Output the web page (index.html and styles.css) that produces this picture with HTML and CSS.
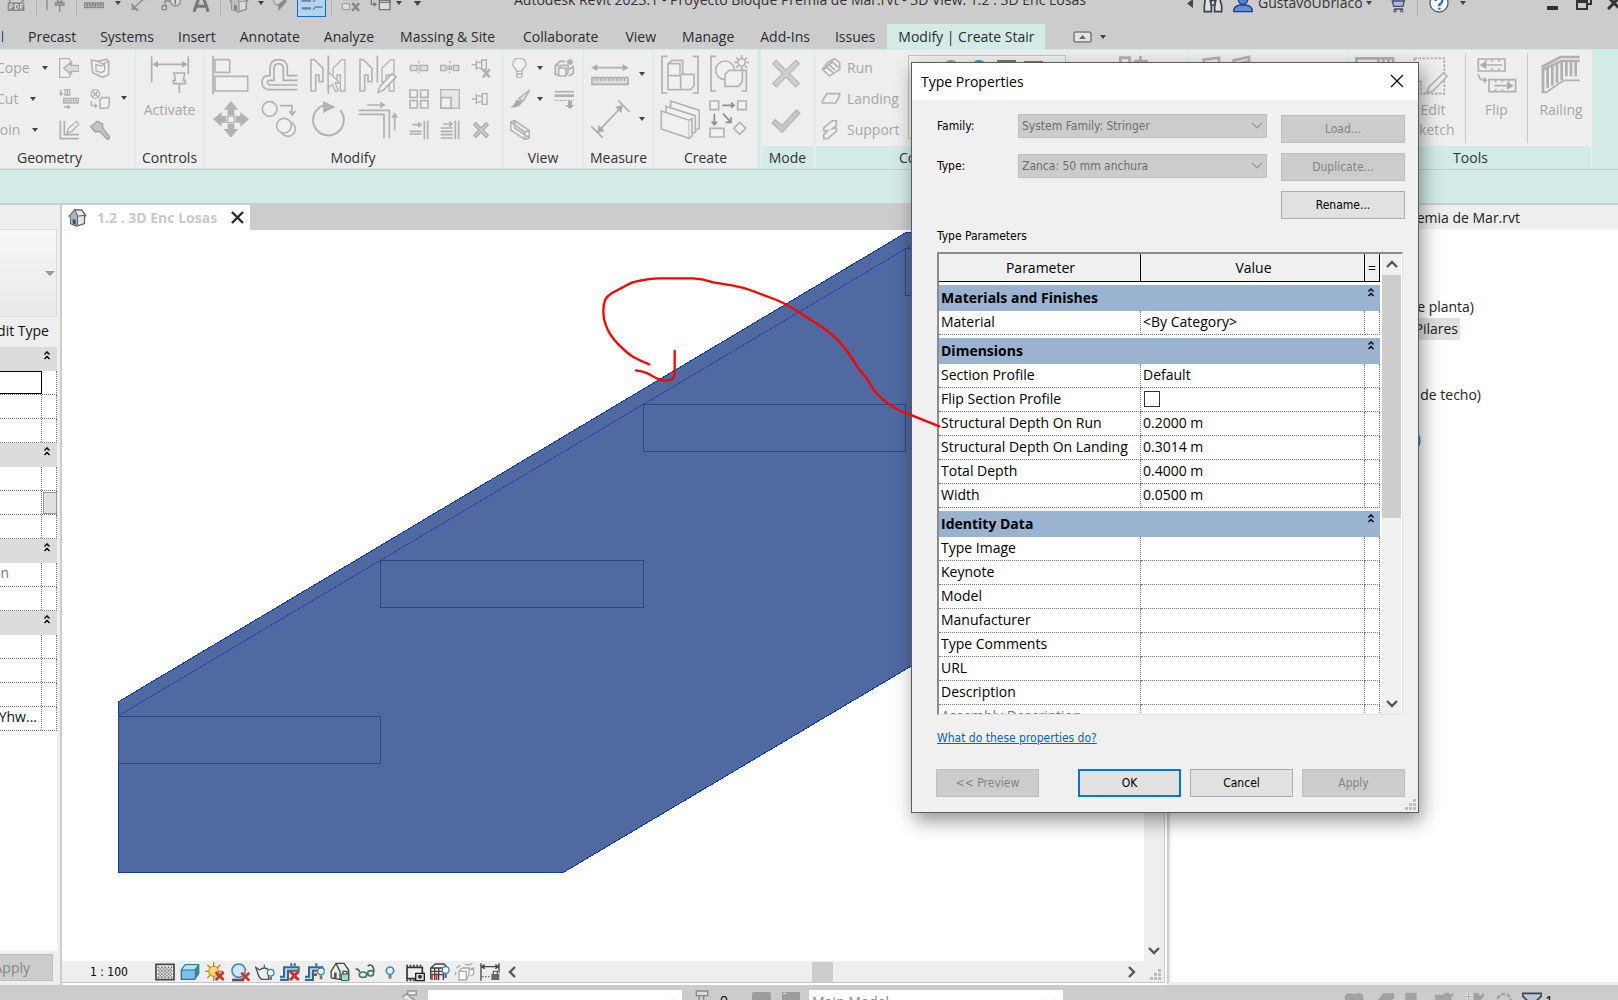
FILE: index.html
```html
<!DOCTYPE html>
<html lang="en">
<head>
<meta charset="utf-8">
<title>Autodesk Revit 2023.1</title>
<link rel="stylesheet" href="styles.css">
</head>
<body>
<svg class="defs" aria-hidden="true">
  <symbol id="dn" viewBox="0 0 6 4"><path d="M0 0h6L3 4z"/></symbol>
  <symbol id="chev" viewBox="0 0 12 8"><path d="M1 1l5 5 5-5" fill="none" stroke="currentColor" stroke-width="1.2"/></symbol>
  <symbol id="arrow" viewBox="0 0 12 8"><path d="M1 1l5 5 5-5" fill="none" stroke="currentColor" stroke-width="2.4"/></symbol>
  <symbol id="dbl" viewBox="0 0 6 9"><path d="M.5 3.500L3 1l2.500 2.500M.5 8L3 5.500 5.500 8" fill="none" stroke="#000" stroke-width="1.500"/></symbol>
  <symbol id="grip" viewBox="0 0 11 11"><path d="M8 0h3v3H8zM4 4h3v3H4zM8 4h3v3H8zM0 8h3v3H0zM4 8h3v3H4zM8 8h3v3H8z" fill="#bdbdbd"/></symbol>
  <symbol id="house" viewBox="0 0 60 60"><path d="M4 26L22 5l22 2 12 17-4 4v21L27 57 8 49V28z" fill="#e4e7ea" stroke="#555b63" stroke-width="4"/><path d="M8 24L24 8l6 18v29L9 48z" fill="#a9b3bf"/><path d="M30 26l24-3M30 27v28M22 6l9 20" stroke="#4d545e" stroke-width="3" fill="none"/><path d="M15 35l9 3v15l-9-4z" fill="#41474f"/></symbol>
</svg>

<header class="titlebar">
  <div class="title-row">
    <div class="quick">
      <svg width="20" height="20" viewBox="0 0 60 60"><path d="M8 30V2h40v12M8 48h44M38 18h14l-8-9M52 18l-8 9" fill="none" stroke="#888" stroke-width="4"/><path d="M2 28h50v26H2z" fill="#8b8b8b"/><path d="M9 49V34h6q4 4 0 8H9M25 34v15q9 0 9-8t-9-7M41 49V34h8M41 41h6" stroke="#eee" stroke-width="3" fill="none"/></svg>
      <i class="sep"></i>
      <svg width="22" height="20" viewBox="0 0 66 60"><path d="M3 52V2M2 10h22M32 10h18l-3 16h-12zM28 30h26v6H28zM41 36v20" fill="none" stroke="#888" stroke-width="4"/></svg>
      <i class="sep"></i>
      <svg width="20" height="20" viewBox="0 0 60 60"><path d="M2 14h56M12 8L3 14l9 6M48 8l9 6-9 6" fill="none" stroke="#888" stroke-width="4"/><path d="M2 30h56v14H2z" fill="#bbb" stroke="#888" stroke-width="4"/><path d="M8 37h46" stroke="#666" stroke-width="6" stroke-dasharray="4 4"/></svg>
      <svg class="dn" width="6" height="4"><use href="#dn"/></svg>
      <svg width="20" height="20" viewBox="0 0 60 60"><path d="M10 46L50 10M4 34l20 20M8 32l-1 17 17-1M38 12l14-4-4 14" fill="none" stroke="#8a8a8a" stroke-width="4"/></svg>
      <svg width="20" height="20" viewBox="0 0 60 60"><path d="M4 38h12v12H4zM12 36V24h18" fill="none" stroke="#888" stroke-width="4"/><circle cx="43" cy="24" r="15" fill="#d8d8d8" stroke="#8d8d8d" stroke-width="4"/><path d="M43 14v20" stroke="#777" stroke-width="4"/></svg>
      <svg width="18" height="20" viewBox="0 0 54 60"><path d="M6 56L24 6h7l18 50M14 40h26" fill="none" stroke="#777" stroke-width="9"/></svg>
      <i class="sep"></i>
      <svg class="faded" width="20" height="20"><use href="#house"/></svg>
      <svg class="dn" width="6" height="4"><use href="#dn"/></svg>
      <svg width="17" height="20" viewBox="0 0 51 60"><circle cx="24" cy="20" r="17" fill="#d0d0d0" stroke="#999" stroke-width="4"/><path d="M22 54V34l24-20v14z" fill="#888"/></svg>
      <button class="toggle-on" aria-label="Thin lines"><svg width="22" height="20" viewBox="0 0 66 60"><path d="M2 23h28M2 46h28" stroke="#6d7f93" stroke-width="7"/><path d="M36 26l8-8h20M36 50l8-8h20M2 8h28M36 8h28" stroke="#6d7f93" stroke-width="4" fill="none"/></svg></button>
      <i class="sep"></i>
      <svg width="20" height="20" viewBox="0 0 60 60"><path d="M4 6h22v14H4zM32 6h22v14H32zM4 32h22v18H4z" fill="#ddd" stroke="#9a9a9a" stroke-width="3"/><path d="M34 30l20 24M54 30L34 54" stroke="#8a8a8a" stroke-width="8"/></svg>
      <svg width="22" height="20" viewBox="0 0 66 60"><path d="M28 22h32v28H28z" fill="#ddd" stroke="#777" stroke-width="4"/><path d="M28 22h32v6H28zM4 8v26h12M11 28l7 6-7 6M4 8h14" fill="none" stroke="#777" stroke-width="4"/></svg>
      <svg class="dn" width="6" height="4"><use href="#dn"/></svg>
      <svg class="dn" width="9" height="5"><use href="#dn"/></svg>
    </div>
    <h1 class="app-title">Autodesk Revit 2023.1 - Proyecto Bloque Premia de Mar.rvt - 3D View: 1.2 . 3D Enc Losas</h1>
    <div class="account">
      <svg width="6" height="9" viewBox="0 0 6 9"><path d="M6 0v9L0 4.500z" fill="#444"/></svg>
      <svg width="20" height="20" viewBox="0 0 60 60"><path d="M9 6h12v14l4 18v18H4V38zM39 6h12v14l5 18v18H35V38l4-18zM24 22h12v14H24z" fill="#dfe3e8" stroke="#3b424b" stroke-width="5"/></svg>
      <svg width="20" height="20" viewBox="0 0 60 60"><circle cx="30" cy="20" r="14" fill="#4f7fe0" stroke="#2b3e6b" stroke-width="4"/><path d="M2 56q0-18 20-20h16q20 2 20 20z" fill="#5b8cf0" stroke="#2b3e6b" stroke-width="4"/></svg>
      <span class="user">GustavoUbriaco</span>
      <svg class="dn" width="6" height="4"><use href="#dn"/></svg>
      <svg width="19" height="20" viewBox="0 0 57 60"><path d="M2 6h10l8 34h28l6-26H14M22 48h26M14 24h38" fill="#aeb7dc" stroke="#4a4f72" stroke-width="4"/><circle cx="24" cy="53" r="4" fill="none" stroke="#333" stroke-width="3"/><circle cx="44" cy="53" r="4" fill="none" stroke="#333" stroke-width="3"/></svg>
      <i class="sep"></i>
      <svg width="20" height="20" viewBox="0 0 60 60"><circle cx="30" cy="30" r="27" fill="#fff" stroke="#56606b" stroke-width="4"/><path d="M20 24q0-10 10-10t10 9q0 6-9 12v5M31 44v6" stroke="#2d6bd6" stroke-width="7" fill="none"/></svg>
      <svg class="dn" width="6" height="4"><use href="#dn"/></svg>
      <svg width="11" height="14" viewBox="0 0 11 14"><path d="M0 12h11" stroke="#333" stroke-width="4"/></svg>
      <svg width="16" height="14" viewBox="0 0 16 14"><path d="M1 5h10v8H1zM1 6h10M5 4V1h10v7h-3" fill="none" stroke="#333" stroke-width="2"/></svg>
      <svg width="14" height="14" viewBox="0 0 14 14"><path d="M1 1l12 12M13 1L1 13" stroke="#333" stroke-width="3"/></svg>
    </div>
  </div>
</header>

<nav class="tabs">
  <a class="tab first" href="#">Steel</a><a class="tab" href="#">Precast</a><a class="tab" href="#">Systems</a><a class="tab" href="#">Insert</a><a class="tab" href="#">Annotate</a><a class="tab" href="#">Analyze</a><a class="tab long" href="#">Massing &amp; Site</a><a class="tab long" href="#">Collaborate</a><a class="tab mid" href="#">View</a><a class="tab mid" href="#">Manage</a><a class="tab mid" href="#">Add-Ins</a><a class="tab" href="#">Issues</a><a class="tab active" href="#">Modify | Create Stair</a>
  <svg class="min-ribbon" width="19" height="12" viewBox="0 0 19 12"><rect x="1" y="1" width="17" height="10" rx="2" fill="#e4e4e4" stroke="#7b7b7b" stroke-width="1.500"/><path d="M6 8h7L9.500 4z" fill="#666"/></svg>
  <svg class="dn" width="6" height="4"><use href="#dn"/></svg>
</nav>

<div class="ribbon">
  <section class="panel p-geometry">
    <div class="panel-body">
      <div class="stack geo-text">
        <button>Cope<svg class="dn" width="6" height="4"><use href="#dn"/></svg></button>
        <button>Cut<svg class="dn" width="6" height="4"><use href="#dn"/></svg></button>
        <button>Join<svg class="dn" width="6" height="4"><use href="#dn"/></svg></button>
      </div>
      <div class="icons geo">
        <button aria-label="Notch"><svg viewBox="0 0 60 60"><path d="M2 2h28l8 12v30l-8 14H2z" class="f"/><path d="M34 14L14 31l20 17V40h26V22H34z" class="d"/></svg></button>
        <button aria-label="Cut profile"><svg viewBox="0 0 60 60"><path d="M14 28h46v14H14z" class="d"/><path d="M18 2h14v16H18zM25 4v12M6 2v14M1 12l5 6 5-6M14 54h18M26 49l6 5-6 5" class="s"/><path d="M18 35h42" stroke="#999" stroke-width="5" stroke-dasharray="4 4"/></svg></button>
        <button aria-label="Beam joins"><svg viewBox="0 0 60 60"><path d="M4 2v54h56M16 2v42h44" class="s w"/><path d="M24 40l4-14L52 4l8 8-22 22z" class="f"/></svg></button>
        <button aria-label="Split face"><svg viewBox="0 0 60 60"><path d="M4 6l20 4 26-6 6 6v40l-18 8L8 44z" class="f w"/><path d="M18 20l16 4 10-4v18l-10 6-16-6zM24 10l14 8 18-8" class="s"/></svg></button>
        <button aria-label="Paint"><svg viewBox="0 0 60 60"><circle cx="16" cy="15" r="13" class="f"/><path d="M7 6l18 18M25 6L7 24M4 36v14h16M14 44l6 6-6 6" class="s"/><path d="M30 32l6-6h22v22l-6 10H30z" class="f w"/></svg></button>
        <button aria-label="Demolish"><svg viewBox="0 0 60 60"><path d="M2 20L22 4l16 8v12l22 28-7 7-25-25-12 2z" fill="#c4c4c4" stroke="#a2a2a2" stroke-width="4"/></svg></button>
      </div>
      <svg class="dn geo-dn" width="6" height="4"><use href="#dn"/></svg>
    </div>
    <h2>Geometry</h2>
  </section>
  <section class="panel p-controls">
    <div class="panel-body">
      <button class="big"><svg width="40" height="40" viewBox="0 0 120 120"><path d="M5 4v78M115 4v54M10 28h100" class="s w"/><path d="M8 28l16-10v20zM112 28L96 18v20z" fill="#aaa"/><path d="M72 54h32l-4 22h6v10H70V76h6zM88 86v28" class="s w"/></svg><span>Activate</span></button>
    </div>
    <h2>Controls</h2>
  </section>
  <section class="panel p-modify">
    <div class="panel-body">
      <div class="bigs">
        <button aria-label="Align"><svg viewBox="0 0 120 120"><path d="M6 2v116" class="s w"/><path d="M12 14h44v38H12zM12 64h98v44H12z" class="f w"/></svg></button>
        <button aria-label="Move"><svg viewBox="0 0 120 120"><path d="M60 6l22 26H70v16H50V32H38zM60 116l22-26H70V74H50v16H38zM6 61l26-22v12h14v20H32v12zM114 61L88 39v12H74v20h14v12z" fill="#b2b2b2"/><path d="M50 51h20v20H50z" class="f"/></svg></button>
        <button aria-label="Offset"><svg viewBox="0 0 120 120"><path d="M112 62H82V40q0-26-26-26T30 40v22h-6q-18 2-18 20t18 22h88M112 76H70V42q0-16-14-16T42 42v34H28q-12 6 0 14h84" class="s w"/></svg></button>
        <button aria-label="Copy"><svg viewBox="0 0 120 120"><circle cx="29" cy="30" r="22" class="f w"/><path d="M60 20h36v24M88 36l9 12 9-12" class="s w"/><circle cx="84" cy="90" r="22" class="f w"/><circle cx="72" cy="80" r="22" class="f w"/></svg></button>
        <button aria-label="Mirror pick axis"><svg viewBox="0 0 120 120"><path d="M6 14h10l26 26v40H30V60H20v48H6z" class="f w"/><path d="M108 14H98L72 40v40h12V60h10v48h14z" class="f"/><path d="M58 2v114" class="s w"/><path d="M58 50l34 34H78l10 22-8 4-10-22-12 10z" class="f"/></svg></button>
        <button aria-label="Rotate"><svg viewBox="0 0 120 120"><path d="M94 34a46 46 0 1 1-52-14" fill="none" stroke="#b2b2b2" stroke-width="6"/><path d="M42 6l38 18-38 18z" fill="#b2b2b2"/></svg></button>
        <button aria-label="Mirror draw axis"><svg viewBox="0 0 120 120"><path d="M6 14h10l26 26v40H30V60H20v48H6z" class="f w"/><path d="M108 14H98L72 40v40h12V60h10v48h14z" class="f"/><path d="M58 2v80" class="s w"/><path d="M60 112l6-18 36-38 12 10-38 40z" class="f w"/></svg></button>
        <button aria-label="Trim corner"><svg viewBox="0 0 120 120"><path d="M28 18h48M66 10l12 8-12 8M110 94V46M102 56l8-12 8 12M2 34h92v84M2 46h76v72" class="s w"/></svg></button>
      </div>
      <div class="icons mod">
        <button aria-label="Split"><svg viewBox="0 0 60 60"><path d="M4 22h20v16H4zM34 22h22v16H34z" class="d"/><path d="M30 10v40" class="s" stroke-dasharray="6 4"/></svg></button>
        <button aria-label="Array"><svg viewBox="0 0 60 60"><path d="M3 3h22v22H3zM35 3h22v22H35zM3 35h22v22H3zM35 35h22v22H35z" class="f w"/></svg></button>
        <button aria-label="Trim single"><svg viewBox="0 0 60 60"><path d="M46 2v56M56 2v56M2 34h36M2 42h36M10 14h24M28 7l8 7-8 7" class="s w"/></svg></button>
        <button aria-label="Split with gap"><svg viewBox="0 0 60 60"><path d="M2 22h16v16H2zM40 22h16v16H40z" class="d"/><path d="M29 10v40" class="s" stroke-dasharray="6 4"/><path d="M24 26h10v8H24z" class="s"/></svg></button>
        <button aria-label="Scale"><svg viewBox="0 0 60 60"><path d="M2 2h56v56H2z" fill="#e6e6e6" stroke="#b4b4b4" stroke-width="4"/><path d="M3 26h30v31H3z" class="f w"/></svg></button>
        <button aria-label="Trim multiple"><svg viewBox="0 0 60 60"><path d="M46 2v56M56 2v56M2 24h36M2 34h36M2 44h36M2 54h36M10 12h24M28 5l8 7-8 7" class="s w"/></svg></button>
        <button aria-label="Unpin"><svg viewBox="0 0 60 60"><path d="M2 20h14M16 6v30M16 14l16-2v20l-16-4M32 6h14v28H32z" class="s"/><path d="M36 34l20 24M56 34L36 58" class="s ww"/></svg></button>
        <button aria-label="Pin"><svg viewBox="0 0 60 60"><path d="M2 30h14M16 14v32M16 20l18 2v16l-18 2M34 14h14v32H34z" class="s"/></svg></button>
        <button aria-label="Delete"><svg viewBox="0 0 60 60"><path d="M10 10l40 40M50 10L10 50" stroke="#aaa" stroke-width="13"/><path d="M12 12l36 36M48 12L12 48" stroke="#d0d0d0" stroke-width="5"/></svg></button>
      </div>
    </div>
    <h2>Modify</h2>
  </section>
  <section class="panel p-view">
    <div class="panel-body">
      <div class="icons v1">
        <button aria-label="Hide"><svg viewBox="0 0 60 60"><path d="M20 38C18 32 8 28 8 18a20 18 0 0 1 40 0c0 10-10 14-12 20v18l-8 4-8-4zM20 40h16M20 48h16" class="f"/></svg></button>
        <button aria-label="Override"><svg viewBox="0 0 60 60"><path d="M60 2L40 36 26 28z" class="d"/><path d="M38 36q-6 22-38 20 14-8 18-24z" fill="#aaa"/></svg></button>
        <button aria-label="Selection box"><svg viewBox="0 0 60 60"><path d="M2 6l12-4 44 30v22l-14 4L2 30zM2 6l42 30v20M14 2v22l42 28M44 36l14-4" class="f w"/></svg></button>
      </div>
      <div class="stack v-dn"><svg class="dn" width="6" height="4"><use href="#dn"/></svg><svg class="dn" width="6" height="4"><use href="#dn"/></svg></div>
      <div class="icons v1">
        <button aria-label="Displace"><svg viewBox="0 0 60 60"><path d="M4 22l14-12h16M4 22v28h10M44 34l14-8v20l-14 8M4 22h12" class="s w"/><path d="M14 30h22v24H14zM14 30l8-8h20v22l-6 8" class="f w"/><path d="M48 2v20M38 12h20M41 5l14 14M55 5L41 19" class="s"/></svg></button>
        <button aria-label="Linework"><svg viewBox="0 0 60 60"><path d="M2 8h58" class="s w"/><path d="M2 20h58" class="s ww"/><path d="M2 34h58" class="s" stroke-dasharray="5 3"/><path d="M42 36h12v12h8L48 60 34 48h8z" fill="#aaa"/></svg></button>
      </div>
    </div>
    <h2>View</h2>
  </section>
  <section class="panel p-measure">
    <div class="panel-body">
      <div class="bigs">
        <button aria-label="Measure length"><svg viewBox="0 0 120 120"><path d="M8 38h104" class="s w"/><path d="M4 38l18-10v20zM116 38L98 28v20z" fill="#aaa"/><path d="M6 68h108v20H6z" class="d w"/><path d="M14 74h94" stroke="#8f8f8f" stroke-width="6" stroke-dasharray="3 5"/></svg></button>
        <button aria-label="Aligned dimension"><svg viewBox="0 0 120 120"><path d="M24 98l72-76M4 82l34 34M84 4l34 34" class="s w"/><path d="M22 102l4-24 18 18zM98 18l-4 24-18-18z" fill="#aaa"/></svg></button>
      </div>
      <div class="stack2"><svg class="dn" width="6" height="4"><use href="#dn"/></svg><svg class="dn" width="6" height="4"><use href="#dn"/></svg></div>
    </div>
    <h2>Measure</h2>
  </section>
  <section class="panel p-create">
    <div class="panel-body">
      <div class="bigs">
        <button aria-label="Create group"><svg viewBox="0 0 120 120"><path d="M22 4H6v110h16M98 4h16v110H98" class="s w"/><path d="M24 26l12-10h32v42h34v34l-10 12H24zM24 62h38v42M62 62l10-8M24 26h36v32" class="f w"/></svg></button>
        <button aria-label="Create assembly"><svg viewBox="0 0 120 120"><path d="M32 6l86 28v54l-14 6-72-30z" class="f w"/><path d="M18 22l88 28v50l-14 4-74-28z" class="f w"/><path d="M4 36l84 28v54L4 90z" class="f w"/><path d="M88 64l8-6v52l-8 8" class="f w"/></svg></button>
        <button aria-label="Create parts"><svg viewBox="0 0 120 120"><path d="M22 4H6v104h16M98 46v0h14v62H98" class="s w"/><circle cx="48" cy="46" r="28" class="f w"/><path d="M48 58l12-12h40v34L88 94H48z" class="f w"/><circle cx="98" cy="22" r="11" class="f w"/><path d="M98 0v8M98 36v8M76 22h8M112 22h8M82 8l6 6M114 8l-6 6M82 38l6-6M114 38l-6-6" class="s w"/></svg></button>
        <button aria-label="Create similar"><svg viewBox="0 0 120 120"><path d="M3 6h26v26H3zM86 6h26v26H86zM3 88h42v26H3zM92 70l18 18-18 18-18-18z" class="f w"/><path d="M40 19h34M66 11l9 8-9 8M16 44v32M8 68l8 9 8-9M42 44l24 26M66 54v16H50" stroke="#8e8e8e" stroke-width="5" fill="none"/></svg></button>
      </div>
    </div>
    <h2>Create</h2>
  </section>
  <section class="panel ctx p-mode">
    <div class="panel-body">
      <div class="bigs">
        <button aria-label="Cancel edit"><svg viewBox="0 0 120 120"><path d="M24 20l72 72M96 20L24 92" stroke="#b4b4b4" stroke-width="18"/><path d="M27 23l66 66M93 23L27 89" stroke="#cfcfcf" stroke-width="11"/></svg></button>
        <button aria-label="Finish edit"><svg viewBox="0 0 120 120"><path d="M22 66l26 24 50-54" stroke="#b4b4b4" stroke-width="18" fill="none"/><path d="M25 69l23 21 47-51" stroke="#c8c8c8" stroke-width="11" fill="none"/></svg></button>
      </div>
    </div>
    <h2>Mode</h2>
  </section>
  <section class="panel ctx p-comp">
    <div class="panel-body">
      <div class="stack comp-text">
        <button><svg width="20" height="20" viewBox="0 0 60 60"><path d="M4 34L26 54 56 34V14L40 2 20 14z" class="f w"/><path d="M8 34l10-6 18 16M16 26l8-6 18 16M26 18l8-6 18 16" class="s w"/></svg>Run</button>
        <button><svg width="20" height="20" viewBox="0 0 60 60"><path d="M18 14h38v6L44 42H4v-6z" class="f w"/></svg>Landing</button>
        <button><svg width="20" height="20" viewBox="0 0 60 60"><path d="M8 24L34 2h12v14L34 26l12-2v10L20 56H8V44l12-12H8z" class="f w"/></svg>Support</button>
      </div>
      <div class="gallery">
        <svg width="150" height="20" viewBox="0 0 150 20"><circle cx="42" cy="12" r="8" fill="#9a9a9a"/><circle cx="70" cy="12" r="8" fill="#4a8fd0"/><path d="M88 4h19v12H88zM115 5h19v12h-19z" fill="#777"/></svg>
      </div>
    </div>
    <h2>Component</h2>
  </section>
  <section class="panel ctx p-work">
    <div class="panel-body"><svg width="40" height="40" viewBox="0 0 120 120"><path d="M10 40V8h28v16h20M70 2v40M52 18h40" class="s ww"/></svg></div>
    <h2></h2>
  </section>
  <section class="panel ctx p-multi">
    <div class="panel-body"><svg width="80" height="40" viewBox="0 0 240 120"><path d="M20 40V14L66 8v40M110 40V16l46-10v40M130 20v20M110 28l46-8" class="s ww"/></svg></div>
    <h2></h2>
  </section>
  <section class="panel ctx p-tools">
    <div class="panel-body">
      <button class="big t0" aria-label="Convert"><svg width="40" height="40" viewBox="0 0 120 120"><path d="M4 10h110v50H4zM70 10v20M85 10v20M100 10v20" class="s ww"/></svg></button>
      <button class="big t1"><svg width="40" height="40" viewBox="0 0 120 120"><path d="M4 10h90v110M4 10v70h20v36h70" class="s w" stroke-dasharray="8 4"/><path d="M40 114l8-18 44-42 10 10-42 44z" class="f w"/></svg><span>Edit<br>Sketch</span></button>
      <button class="big t2"><svg width="40" height="40" viewBox="0 0 120 120"><path d="M4 12h80v36H4zM36 74h80v36H36zM26 12v8M46 12v8M66 12v8M46 40v8M66 40v8M56 74v8M76 74v8M96 74v8M56 102v8M76 102v8M4 56q0 20 22 20M20 68l8 8-8 8" class="s w"/><path d="M28 30h48M52 92h48" class="s w"/><path d="M8 30l20-12v24zM110 92L90 80v24z" fill="#aaa"/></svg><span>Flip</span></button>
      <button class="big t3"><svg width="40" height="40" viewBox="0 0 120 120"><path d="M2 36L58 6h58M2 46l58-28h56M6 36v76M20 34v66M34 26v66M48 20v64M62 16v60M76 16v48M90 16v48M104 16v48" class="s ww"/><path d="M2 112h14l52-36h48" class="s w"/></svg><span>Railing</span></button>
    </div>
    <h2>Tools</h2>
  </section>
</div>
<div class="options-bar"></div>

<main class="workspace">
  <aside class="properties">
    <div class="type-selector"><svg class="tdn" width="10" height="5" viewBox="0 0 10 5"><path d="M0 0h10L5 5z"/></svg></div>
    <button class="edit-type">Edit Type</button>
    <div class="prop-list">
      <div class="pgroup"><svg width="6" height="9"><use href="#dbl"/></svg></div>
      <div class="prow focus"><span></span></div><div class="prow"><span></span></div><div class="prow"><span></span></div>
      <div class="pgroup"><svg width="6" height="9"><use href="#dbl"/></svg></div>
      <div class="prow"><span></span></div><div class="prow"><span></span><button class="mini" aria-label="Associate parameter"></button></div><div class="prow"><span></span></div>
      <div class="pgroup"><svg width="6" height="9"><use href="#dbl"/></svg></div>
      <div class="prow"><span class="dim">Selection</span></div><div class="prow"><span></span></div>
      <div class="pgroup"><svg width="6" height="9"><use href="#dbl"/></svg></div>
      <div class="prow"><span></span></div><div class="prow"><span></span></div><div class="prow"><span></span></div><div class="prow"><span class="guid">YYhw...</span></div>
    </div>
    <div class="prop-foot"><button class="apply-left" disabled>Apply</button></div>
  </aside>

  <section class="view">
    <div class="doc-tabs">
      <div class="doc-tab"><svg width="19" height="19"><use href="#house"/></svg><span>1.2 . 3D Enc Losas</span><svg class="close-tab" width="13" height="13" viewBox="0 0 13 13"><path d="M1 1l11 11M12 1L1 12" stroke="#2b2b2b" stroke-width="2.400"/></svg></div>
    </div>
    <div class="canvas">
      <svg class="model" width="1082" height="730" viewBox="62 230 1082 730" shape-rendering="crispEdges">
        <path d="M118 872V702L907 232h60v401L564 872z" fill="#5069a0" stroke="#0a3cb0"/>
        <path d="M118 716L966 213" stroke="#2c48a8" fill="none"/>
        <path d="M118.500 716.500h262v47h-262zM380.500 560.500h263v47h-263zM643.500 404.500h262v47h-262zM905.500 248.500h40v47h-40z" fill="none" stroke="#2a4580"/>
      </svg>
      <div class="vscroll"><svg width="12" height="8" class="arr"><use href="#arrow"/></svg></div>
    </div>
    <div class="view-bar">
      <span class="scale">1 : 100</span>
      <div class="vicons">
        <svg viewBox="0 0 60 60"><path d="M3 7h54v46H3z" fill="#f4f4f4" stroke="#444" stroke-width="5"/><path d="M8 16h44M8 26h44M8 36h44M8 46h44" stroke="#666" stroke-width="5" stroke-dasharray="5 5"/><path d="M13 21h40M13 31h40M13 41h40" stroke="#888" stroke-width="5" stroke-dasharray="5 5"/></svg>
        <svg viewBox="0 0 60 60"><path d="M4 24L16 8h40v26L44 52H4z" fill="#7cc0ea" stroke="#33708f" stroke-width="4"/><path d="M4 24L16 8h40L44 24z" fill="#b9e2fa" stroke="#33708f" stroke-width="3"/><path d="M44 24v28l12-18V8z" fill="#3f83ab"/></svg>
        <svg viewBox="0 0 60 60"><path d="M26 0v58M0 28h54M7 8l38 40M46 8L7 48" stroke="#b58a2b" stroke-width="4"/><circle cx="26" cy="28" r="15" fill="#ffd970" stroke="#b88717" stroke-width="3"/><path d="M32 30l24 24M56 30L32 54" stroke="#d2312d" stroke-width="8"/></svg>
        <svg viewBox="0 0 60 60"><path d="M6 54h36" stroke="#555" stroke-width="8"/><circle cx="26" cy="26" r="20" fill="#cfe6fb" stroke="#4e86c0" stroke-width="5"/><path d="M34 32l24 24M58 32L34 56" stroke="#d2312d" stroke-width="8"/></svg>
        <svg viewBox="0 0 60 60"><path d="M2 16l12 8q14-12 28 0l-2 28H20q-10-6-12-20zM28 16v-8" fill="#eee" stroke="#555" stroke-width="4"/><circle cx="47" cy="32" r="10" fill="#fff" stroke="#3d83cc" stroke-width="4"/><path d="M43 44h8v10h-8z" fill="#777"/></svg>
        <svg viewBox="0 0 60 60"><path d="M0 44h12V16h44v10H24v28H0M34 12V4M44 12V4" stroke="#35688f" stroke-width="6" fill="#bcd6ee"/><path d="M30 28l26 26M56 28L30 54" stroke="#d2312d" stroke-width="9"/></svg>
        <svg viewBox="0 0 60 60"><path d="M0 44h12V16h40v10H24v28H0M34 12V4" stroke="#35688f" stroke-width="6" fill="#bcd6ee"/><path d="M26 38h10" stroke="#d2312d" stroke-width="8"/><circle cx="48" cy="28" r="10" fill="#fff" stroke="#3d83cc" stroke-width="4"/><path d="M44 40h8v12h-8z" fill="#777"/></svg>
        <svg viewBox="0 0 60 60"><path d="M3 28L18 4h24l14 20v28H28L4 48zM18 4l12 24v24" fill="#ececec" stroke="#444" stroke-width="4"/><path d="M12 32h8v16h-8z" fill="#555"/><path d="M34 36h22v20H34z" fill="#a9d5c4" stroke="#2d5b4d" stroke-width="3"/><path d="M39 36v-8h12v8" fill="none" stroke="#2d5b4d" stroke-width="4"/></svg>
        <svg viewBox="0 0 60 60"><path d="M2 22q8-4 12 8M34 36l4-2M46 8q12 4 10 22M46 8l-8 4" fill="none" stroke="#555" stroke-width="5"/><ellipse cx="24" cy="38" rx="11" ry="8" fill="#dff0f0" stroke="#4c6f77" stroke-width="5"/><ellipse cx="47" cy="34" rx="9" ry="8" fill="#dff0f0" stroke="#4c6f77" stroke-width="5"/></svg>
        <svg viewBox="0 0 60 60"><circle cx="30" cy="26" r="11" fill="#e9f4ff" stroke="#3d83cc" stroke-width="5"/><path d="M25 38h10v12H25z" fill="#888"/></svg>
        <svg viewBox="0 0 60 60"><path d="M6 16h46v34H6z" fill="#eee" stroke="#333" stroke-width="5"/><path d="M4 11h50M4 55h28" stroke="#333" stroke-width="5" stroke-dasharray="5 5"/><path d="M32 34h26v22H32z" fill="#ddd" stroke="#222" stroke-width="4"/><circle cx="45" cy="44" r="6" fill="#333"/></svg>
        <svg viewBox="0 0 60 60"><path d="M2 52V18l14-12h26l12 12M2 28h38M2 38h38M14 18v36M26 18v36M2 18h38v36" fill="none" stroke="#444" stroke-width="4"/><path d="M6 34v20M20 34v20" stroke="#c33" stroke-width="5"/><circle cx="47" cy="24" r="10" fill="#fff" stroke="#3d83cc" stroke-width="4"/><path d="M43 36h8v12h-8z" fill="#777"/></svg>
        <svg viewBox="0 0 60 60"><path d="M12 28h22v26H12zM12 28l10-10h20v20L34 54M4 18l12-8M2 30v10M44 22l12-4v18l-8 6M30 8h16l6-4" fill="#fafafa" stroke="#aaa" stroke-width="4"/></svg>
        <svg viewBox="0 0 60 60"><path d="M3 4v52M57 4v28M3 14h54M14 8L5 14l9 6M46 8l9 6-9 6" fill="none" stroke="#444" stroke-width="4"/><path d="M6 44h24" stroke="#777" stroke-width="4" stroke-dasharray="5 4"/><path d="M34 36h24v18H34z" fill="#666"/><path d="M40 36v-8h12v8" fill="none" stroke="#666" stroke-width="4"/></svg>
      </div>
      <svg class="arr left" width="12" height="8"><use href="#arrow"/></svg>
      <div class="htrack"><i class="hthumb"></i></div>
      <svg class="arr right" width="12" height="8"><use href="#arrow"/></svg>
      <svg class="vgrip" width="11" height="11"><use href="#grip"/></svg>
    </div>
  </section>

  <aside class="browser">
    <h2 class="browser-head">Premia de Mar.rvt</h2>
    <ul class="tree">
      <li class="r1">(Detalle de planta)</li>
      <li class="r2"><span class="sel">Planta Pilares</span></li>
      <li class="r3">(Plano de techo)</li>
      <li class="r4">(all)</li>
    </ul>
  </aside>
</main>

<footer class="status">
  <svg class="st1" width="18" height="20" viewBox="0 0 54 60"><path d="M20 3h26v12H20zM4 22l14-12 8 10 22 16" fill="#eee" stroke="#999" stroke-width="5"/></svg>
  <div class="st-box b1"><svg class="chv" width="12" height="8"><use href="#chev"/></svg></div>
  <svg class="st2" width="14" height="20" viewBox="0 0 42 60"><path d="M4 3h34v14H4zM12 18v16M26 18v16" fill="#ddd" stroke="#888" stroke-width="4"/></svg>
  <span class="zero">0</span>
  <svg class="st3" width="20" height="16" viewBox="0 0 20 16"><path d="M0 2q0-2 2-2h15q2 0 2 2v14H0z" fill="#9c9c9c"/></svg>
  <svg class="st3" width="19" height="16" viewBox="0 0 19 16"><path d="M0 0h18v16H0z" fill="#9c9c9c"/><path d="M1 1.500h3" stroke="#eee"/></svg>
  <div class="st-box b2"><span>Main Model</span><svg class="chv" width="12" height="8"><use href="#chev"/></svg></div>
  <div class="st-right">
    <svg viewBox="0 0 60 60"><path d="M2 12q4-10 16-8 12 4 24 0 14-2 16 8v40H2z" fill="#a2a2a2"/></svg>
    <svg viewBox="0 0 60 60"><path d="M4 30L24 4h34v12L40 40z" fill="#a2a2a2"/></svg>
    <svg viewBox="0 0 60 60"><path d="M4 2h34v24l12 10H4z" fill="#a2a2a2"/></svg>
    <svg viewBox="0 0 60 60"><path d="M2 8h24l8-6h10l6 6 8-6v10l-8 6 8 8v20H8z" fill="#a2a2a2"/></svg>
    <svg viewBox="0 0 60 60"><path d="M14 2v28M2 14h28" stroke="#eee" stroke-width="8"/><path d="M14 2v28M2 14h28M30 4h12l8 10 8-10v10l-8 8 8 8v20H30z" fill="#a2a2a2" stroke="#a2a2a2" stroke-width="3"/></svg>
    <svg viewBox="0 0 60 60"><circle cx="30" cy="26" r="20" fill="none" stroke="#a2a2a2" stroke-width="8" stroke-dasharray="12 5"/></svg>
    <svg viewBox="0 0 60 60"><path d="M2 4h56v8L36 34H24L2 12z" fill="#b8c6d6" stroke="#3c434c" stroke-width="5"/></svg>
    <span>1</span>
  </div>
</footer>

<div class="dialog" role="dialog" aria-labelledby="dlg-title">
  <header class="dlg-head">
    <h2 id="dlg-title">Type Properties</h2>
    <button class="dlg-close" aria-label="Close"><svg width="14" height="14" viewBox="0 0 14 14"><path d="M1 1l12 12M13 1L1 13" stroke="#000" stroke-width="1.200"/></svg></button>
  </header>
  <div class="dlg-body">
    <div class="dlg-top">
      <div class="fields">
        <label for="family">Family:</label>
        <div class="combo"><select id="family" disabled><option>System Family: Stringer</option></select><svg width="12" height="8"><use href="#chev"/></svg></div>
        <label for="type">Type:</label>
        <div class="combo"><select id="type" disabled><option>Zanca: 50 mm anchura</option></select><svg width="12" height="8"><use href="#chev"/></svg></div>
      </div>
      <div class="side">
        <button class="btn" disabled>Load...</button>
        <button class="btn" disabled>Duplicate...</button>
        <button class="btn">Rename...</button>
      </div>
    </div>
    <h3>Type Parameters</h3>
    <div class="frame">
      <div class="table-wrap">
        <table>
          <colgroup><col class="c1"><col><col class="c3"></colgroup>
          <thead><tr><th>Parameter</th><th>Value</th><th>=</th></tr></thead>
          <tbody>
            <tr class="gap"><td colspan="3"></td></tr>
            <tr class="group"><th colspan="3"><div>Materials and Finishes<svg width="6" height="9"><use href="#dbl"/></svg></div></th></tr>
            <tr><td>Material</td><td>&lt;By Category&gt;</td><td></td></tr>
            <tr class="gap"><td colspan="3"></td></tr>
            <tr class="group"><th colspan="3"><div>Dimensions<svg width="6" height="9"><use href="#dbl"/></svg></div></th></tr>
            <tr><td>Section Profile</td><td>Default</td><td></td></tr>
            <tr><td><label for="flip">Flip Section Profile</label></td><td><input type="checkbox" id="flip"></td><td></td></tr>
            <tr><td>Structural Depth On Run</td><td>0.2000 m</td><td></td></tr>
            <tr><td>Structural Depth On Landing</td><td>0.3014 m</td><td></td></tr>
            <tr><td>Total Depth</td><td>0.4000 m</td><td></td></tr>
            <tr><td>Width</td><td>0.0500 m</td><td></td></tr>
            <tr class="gap"><td colspan="3"></td></tr>
            <tr class="group"><th colspan="3"><div>Identity Data<svg width="6" height="9"><use href="#dbl"/></svg></div></th></tr>
            <tr><td>Type Image</td><td></td><td></td></tr>
            <tr><td>Keynote</td><td></td><td></td></tr>
            <tr><td>Model</td><td></td><td></td></tr>
            <tr><td>Manufacturer</td><td></td><td></td></tr>
            <tr><td>Type Comments</td><td></td><td></td></tr>
            <tr><td>URL</td><td></td><td></td></tr>
            <tr><td>Description</td><td></td><td></td></tr>
            <tr class="muted"><td>Assembly Description</td><td></td><td></td></tr>
          </tbody>
        </table>
      </div>
      <div class="scroll"><svg class="arr up" width="12" height="8"><use href="#arrow"/></svg><i></i><svg class="arr" width="12" height="8"><use href="#arrow"/></svg></div>
    </div>
    <a class="help" href="#">What do these properties do?</a>
    <div class="actions">
      <button class="btn preview" disabled>&lt;&lt; Preview</button>
      <button class="btn default">OK</button>
      <button class="btn">Cancel</button>
      <button class="btn" disabled>Apply</button>
    </div>
  </div>
  <svg class="dlg-grip" width="11" height="11"><use href="#grip"/></svg>
</div>

<svg class="markup" width="360" height="204" viewBox="0 0 1080 612" aria-hidden="true">
  <path d="M178 418Q150 407 130 396Q108 382 85 358Q58 330 48 302Q40 284 40 262Q40 240 45 225Q51 214 66 204L125 173Q160 162 205 160H310Q340 162 370 172L430 182Q460 188 480 195L560 225Q590 238 625 260L690 302Q725 325 750 352Q775 380 805 430L835 467Q848 492 858 503Q890 538 930 557L1048 604"/>
  <path d="M138 436Q165 440 178 448Q200 462 213 465Q235 470 245 463Q254 456 254 445V378"/>
</svg>
</body>
</html>
```
FILE: styles.css
```css
* { box-sizing: border-box; }

body {
  margin: 0;
  height: 100vh;
  display: flex;
  flex-direction: column;
  overflow: hidden;
  background: #ccc;
  color: #333;
  font: 14px/20px "Open Sans", "Noto Sans", sans-serif;
}

button, select, input { font: inherit; color: inherit; margin: 0; }
button { padding: 0; border: 0; background: none; }
svg { display: block; flex: none; }
h1, h2, h3 { margin: 0; font-size: 14px; font-weight: 400; }
a { color: inherit; text-decoration: none; }
.defs { position: absolute; width: 0; height: 0; }
.dn { fill: #444; }
.arr { color: #555; }
.faded { filter: grayscale(1); opacity: .55; }

/* symbols in the disabled ribbon */
.f { fill: #f0f0f0; stroke: #b4b4b4; stroke-width: 4; }
.d { fill: #dcdcdc; stroke: #b0b0b0; stroke-width: 4; }
.s { fill: none; stroke: #b0b0b0; stroke-width: 4; }
.w { stroke-width: 5; }
.ww { stroke-width: 8; }

/* title bar */
.titlebar { height: 24px; flex: none; overflow: hidden; }
.title-row { display: flex; align-items: center; height: 30px; margin-top: -12px; }
.quick {
  display: grid;
  grid-template-columns: 29px 10px 30px 8px 31px 15px 31px 31px 28px 9px 29px 13px 26px 34px 10px 29px 26px 17px 101px;
  align-items: center;
  padding-left: 7px;
}
.sep { width: 1px; height: 26px; background: #b2b2b2; }
.toggle-on { width: 29px; height: 27px; border: 1px solid #1669c9; outline: 0; background: #b3d3f3; display: grid; place-items: center; }
.app-title { padding-bottom: 7px; white-space: nowrap; }
.account {
  margin-left: auto;
  display: grid;
  grid-template-columns: 16px 30px 25px 108px 21px 30px 12px 31px 87px 29px 31px 11px;
  align-items: center;
}

/* ribbon tabs */
.tabs { height: 25px; flex: none; display: flex; align-items: center; padding-left: 2px; color: #2c2c2c; }
.tab { padding: 0 12px; line-height: 25px; white-space: nowrap; }
.tab.first { width: 14px; padding: 0 12px 0 0; direction: rtl; overflow: hidden; }
.tab.long { padding: 0 14px; }
.tab.mid { padding: 0 13px; }
.tab.active { background: #d3ebe7; padding: 0 11px; }
.min-ribbon { margin: 0 8px 0 28px; }

/* ribbon */
.ribbon { display: flex; flex: none; height: 121px; background: #d3ebe7; border-top: 1px solid #d3ebe7; border-bottom: 1px solid #c6c9c9; padding-bottom: 1px; overflow: hidden; }
.panel { display: flex; flex-direction: column; flex: none; background: #eee; border-right: 1px solid #d3ebe7; overflow: hidden; }
.panel h2 { height: 22px; line-height: 24px; text-align: center; flex: none; }
.ctx h2 { background: #d3ebe7; margin: 0 1px; }
.panel-body { flex: 1; display: flex; color: #a6a6a6; overflow: hidden; }
.stack { display: grid; grid-template-rows: repeat(3, 31px); align-items: center; padding-top: 2px; align-content: start; }
.stack button { display: flex; align-items: center; gap: 12px; }
.icons { display: grid; grid-template-rows: repeat(3, 31px); grid-auto-flow: column; grid-auto-columns: 31px; align-items: center; padding-top: 2px; align-content: start; }
.icons svg { width: 20px; height: 20px; }
.bigs { display: grid; grid-template-rows: 44px 44px; grid-auto-flow: column; grid-auto-columns: 49px; padding-top: 5px; align-content: start; }
.bigs svg { width: 40px; height: 40px; }
.bigs button { width: 40px; height: 40px; }
.big { display: flex; flex-direction: column; align-items: center; padding-top: 5px; }
.big span { margin-top: 5px; }

.p-geometry { width: 136px; }
.p-geometry h2 { padding-right: 36px; }
.geo-text { width: 59px; flex: none; }
.geo-text button { margin-left: -4px; }
.geo-dn { margin-top: 46px; }
.p-controls { width: 68px; }
.p-controls .panel-body { justify-content: center; }
.p-modify { width: 299px; }
.p-modify .bigs { margin-left: 7px; width: 202px; }
.p-view { width: 81px; }
.p-view .panel-body { padding-left: 7px; }
.v1 { grid-auto-columns: 27px; }
.v-dn { width: 17px; }
.p-measure { width: 70px; }
.p-measure .bigs { margin-left: 6px; }
.p-measure .stack2 { padding-top: 22px; display: grid; grid-auto-rows: 45px; align-content: start; }
.p-create { width: 103px; border-right: 0; }
.p-create .bigs { margin-left: 6px; }
.p-mode { width: 58px; border-left: 4px solid #d3ebe7; }
.p-mode .bigs { margin-left: 5px; }
.p-comp { width: 254px; }
.p-comp h2 { padding-right: 8px; }
.comp-text { padding-left: 6px; width: 93px; flex: none; }
.comp-text button { gap: 6px; }
.gallery { width: 158px; height: 84px; margin-top: 5px; border: 1px solid #c2c2c2; }
.p-work { width: 120px; }
.p-work svg { margin: 5px 0 0 48px; }
.p-multi { width: 160px; }
.p-multi svg { margin: 5px 0 0 8px; }
.p-tools { width: 244px; }
.p-tools .big { border-right: 1px solid #c8c8c8; height: 90px; margin-top: 3px; padding-top: 2px; line-height: 20px; }
.p-tools .t0 { width: 52px; border: 0; }
.p-tools .t1 { width: 65px; }
.p-tools .t2 { width: 62px; }
.p-tools .t3 { width: 62px; border: 0; padding-left: 4px; }
.options-bar { flex: none; height: 33px; background: #d3ebe7; }

/* workspace */
.workspace { flex: 1; display: flex; min-height: 0; padding-top: 2px; }
.properties { width: 62px; flex: none; display: flex; flex-direction: column; background: #eee; border-right: 2px solid #ccc; padding-right: 3px; overflow: hidden; color: #111; }
.type-selector { height: 88px; flex: none; margin-top: 24px; border: 1px solid #dcdcdc; border-left: 0; background: linear-gradient(#f7f7f7, #e9e9e9); display: flex; align-items: center; justify-content: flex-end; padding-right: 1px; }
.tdn { fill: #999; }
.edit-type { height: 30px; flex: none; text-align: right; padding: 0 8px 2px 0; align-self: flex-end; white-space: nowrap; }
.prop-list { flex: 1; background: #fff; }
.pgroup { height: 24px; background: #dcdcdc; display: flex; justify-content: flex-end; padding: 4px 7px 0 0; }
.prow { height: 24px; display: grid; grid-template-columns: 42px 15px; border-bottom: 1px dotted #777; border-right: 1px dotted #777; }
.prow > span { border-right: 1px dotted #777; display: flex; justify-content: flex-end; align-items: flex-start; min-width: 0; }
.prow .dim { color: #777; padding-right: 32px; }
.prow .guid { padding-right: 4px; }
.focus > span { border: 1px solid #000; border-left: 0; }
.mini { border: 1px solid #999; background: #e0e0e0; margin: 1px 0 0 1px; }
.prop-foot { height: 34px; flex: none; padding: 3px 3px 0 0; }
.apply-left { width: 53px; height: 27px; background: #ccc; border: 1px solid #bdbdbd; border-left: 0; color: #858585; text-align: right; padding-right: 22px; direction: rtl; }

.view { flex: 1; min-width: 0; display: flex; flex-direction: column; background: #fff; border-right: 2px solid #fff; }
.doc-tabs { height: 25px; flex: none; background: #ccc; display: flex; }
.doc-tab { width: 188px; background: #fff; display: flex; align-items: center; padding: 0 6px; gap: 10px; font-weight: 700; color: #c8c8c8; white-space: nowrap; }
.close-tab { margin-left: auto; }
.canvas { flex: 1; min-height: 0; display: flex; justify-content: space-between; overflow: hidden; }
.vscroll { width: 21px; flex: none; background: #eee; border-right: 1px solid #ccc; display: flex; align-items: flex-end; justify-content: center; padding-bottom: 6px; }
.model { flex: 1; min-width: 0; }
.view-bar { height: 22px; flex: none; background: #eee; border-bottom: 1px solid #c6c6c6; border-right: 1px solid #ccc; display: flex; align-items: center; margin-bottom: 2px; }
.scale { width: 93px; padding-left: 28px; white-space: nowrap; color: #000; font: 12px/18px "DejaVu Sans Condensed", "DejaVu Sans", sans-serif; }
.vicons { display: grid; grid-template-columns: repeat(14, 25px); margin-right: 1px; }
.vicons svg { width: 20px; height: 20px; }
.left { transform: rotate(90deg); }
.right { transform: rotate(-90deg); margin-right: 12px; }
.up { transform: rotate(180deg); }
.htrack { flex: 1; height: 20px; padding-left: 294px; }
.hthumb { display: block; width: 21px; height: 20px; background: #ccc; }
.vgrip { align-self: flex-end; margin: 0 3px 2px 0; }

.browser { width: 451px; flex: none; display: flex; flex-direction: column; background: #fff; border-left: 2px solid #ccc; border-bottom: 3px solid #eee; color: #222; }
.browser-head { height: 24px; flex: none; line-height: 26px; background: #eee; padding-right: 98px; text-align: right; }
.tree { flex: 1; list-style: none; margin: 0; padding: 67px 0 0; text-align: right; border-left: 2px solid #eee; }
.tree li { height: 22px; line-height: 22px; }
.sel { background: #e0e0e0; display: inline-block; padding: 0 2px; }
.r1 { margin-right: 144px; }
.r2 { margin-right: 158px; }
.tree .r3 { margin: 44px 137px 0 0; }
.tree .r4 { margin: 22px 197px 0 0; color: #1f5fae; }

/* status bar */
.status { height: 15px; flex: none; display: flex; align-items: flex-start; padding: 5px 0 0 401px; overflow: hidden; }
.st-box { height: 24px; background: #fff; display: flex; justify-content: space-between; padding: 2px 3px 0; color: #888; }
.b1 { width: 254px; margin: 0 13px 0 9px; }
.b2 { width: 254px; margin-left: 8px; }
.chv { margin: 7px 4px 0 0; }
.b1 .chv { margin-left: auto; }
.zero { color: #000; width: 22px; margin-left: 11px; padding-top: 1px; }
.st3 { margin: 2px 0 0 10px; }
.st-right { margin-left: auto; display: grid; grid-template-columns: 31px 29px 30px 30px 30px 28px 23px 73px; color: #000; }
.st-right span { padding-top: 1px; }
.st-right svg { width: 20px; height: 20px; margin-top: 2px; }

/* type properties window */
.dialog { position: absolute; left: 911px; top: 62px; width: 508px; height: 751px; display: flex; flex-direction: column; background: #f0f0f0; border: 1px solid #5c5c5c; box-shadow: 3px 8px 18px rgba(0, 0, 0, .42); color: #000; font: 12px/20px "DejaVu Sans Condensed", "DejaVu Sans", sans-serif; }
.dlg-head { height: 37px; flex: none; background: #fff; display: flex; align-items: center; justify-content: space-between; padding: 0 14px 0 9px; font-family: "Open Sans", "Noto Sans", sans-serif; }
.dlg-close { padding-bottom: 2px; }
.dlg-body { padding: 14px 13px 0 24px; display: flex; flex-direction: column; }
.dlg-top { display: flex; justify-content: space-between; }
.fields { display: grid; grid-template-columns: 81px 249px; grid-auto-rows: 24px; row-gap: 16px; align-items: center; padding-left: 1px; }
.combo { display: grid; height: 24px; }
.combo select, .combo svg { grid-area: 1 / 1; }
.combo select { appearance: none; border: 1px solid #bfbfbf; border-radius: 0; background: #ccc; color: #6d6d6d; padding: 0 3px; opacity: 1; }
.combo svg { justify-self: end; align-self: center; margin-right: 4px; color: #999; }
.side { display: grid; grid-auto-rows: 28px; gap: 10px; width: 124px; padding-top: 1px; }
.btn { height: 28px; background: #e1e1e1; border: 1px solid #adadad; text-align: center; }
.btn:disabled { background: #ccc; border-color: #bfbfbf; color: #838383; }
.btn.default { border: 2px solid #0078d7; }
.dialog h3 { font-size: 12px; margin: 7px 0 6px 1px; line-height: 20px; }
.frame { height: 463px; margin: 0 2px 0 1px; border: 2px solid #8b8b8b; border-right: 1px solid #e3e3e3; border-bottom: 1px solid #e3e3e3; background: #fff; display: flex; justify-content: space-between; overflow: hidden; }
.table-wrap { width: 441px; overflow: hidden; font: 14px/20px "Open Sans", "Noto Sans", sans-serif; }
table { width: 100%; table-layout: fixed; border-collapse: separate; border-spacing: 0; }
.c1 { width: 202px; }
.c3 { width: 15px; }
td, th { padding: 0 0 0 2px; font-weight: 400; text-align: left; white-space: nowrap; }
td { height: 24px; line-height: 20px; padding-bottom: 2px; border-right: 1px dotted #777; border-bottom: 1px dotted #777; }
.muted { color: #777; }
thead th { height: 28px; background: #f0f0f0; text-align: center; border-right: 1px solid #000; border-bottom: 1px solid #000; }
thead th:last-child { padding: 0; }
.gap td { height: 3px; line-height: 0; border: 0; padding: 0; }
.group th { height: 26px; background: #99b3d1; font-weight: 700; }
.group div { display: flex; justify-content: space-between; padding-right: 6px; }
td input { appearance: none; display: block; width: 16px; height: 16px; border: 1px solid #333; background: #fff; margin-left: 1px; }
.scroll { width: 19px; margin-right: 1px; background: #f0f0f0; display: flex; flex-direction: column; align-items: center; padding: 6px 0; }
.scroll i { width: 19px; height: 243px; background: #cdcdcd; margin-top: 7px; margin-bottom: auto; }
.help { color: #0066cc; text-decoration: underline; align-self: flex-start; margin: 13px 0 21px 1px; line-height: 20px; }
.actions { display: flex; gap: 9px; }
.actions .btn { width: 103px; }
.actions .preview { margin-right: auto; }
.dlg-grip { position: absolute; right: 2px; bottom: 2px; }

/* hand-drawn arrow from the depth row to the stair */
.markup { position: absolute; left: 590px; top: 225px; pointer-events: none; }
.markup path { fill: none; stroke: #f00; stroke-width: 7; stroke-linecap: round; }
```
